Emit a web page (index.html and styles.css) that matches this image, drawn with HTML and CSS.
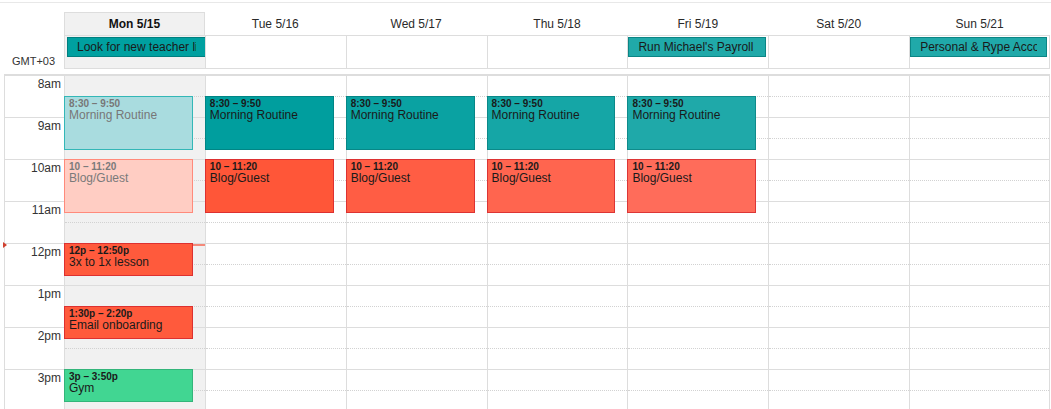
FILE: index.html
```html
<!DOCTYPE html>
<html lang="en">
<head>
    <meta charset="UTF-8">
    <meta name="viewport" content="width=device-width, initial-scale=1.0">
    <title>Week 5/15 - 5/21</title>
    <link rel="stylesheet" href="styles.css">
</head>
<body>
    <div class="topline"></div>
    <div class="calendar">
        <!-- Day headers -->
        <div class="row day-head">
            <div></div>
            <div class="day today">Mon 5/15</div>
            <div class="day">Tue 5/16</div>
            <div class="day">Wed 5/17</div>
            <div class="day">Thu 5/18</div>
            <div class="day">Fri 5/19</div>
            <div class="day">Sat 5/20</div>
            <div class="day">Sun 5/21</div>
        </div>

        <!-- All day events -->
        <div class="row allday">
            <div class="tz">GMT+03</div>
            <div class="cell today"><div class="chip first"><span>Look for new teacher list</span></div></div>
            <div class="cell"></div>
            <div class="cell"></div>
            <div class="cell"></div>
            <div class="cell"><div class="chip light"><span>Run Michael's Payroll</span></div></div>
            <div class="cell"></div>
            <div class="cell"><div class="chip light"><span>Personal &amp; Rype Accounting</span></div></div>
        </div>

        <!-- Time grid -->
        <div class="row grid">
            <div class="gutter">
                <div class="now-mark"></div>
                <div class="hour">8am</div>
                <div class="hour">9am</div>
                <div class="hour">10am</div>
                <div class="hour">11am</div>
                <div class="hour">12pm</div>
                <div class="hour">1pm</div>
                <div class="hour">2pm</div>
                <div class="hour">3pm</div>
            </div>

            <div class="col today">
                <div class="slot"></div><div class="slot"></div><div class="slot"></div><div class="slot"></div>
                <div class="slot"></div><div class="slot"></div><div class="slot"></div><div class="slot"></div>
                <div class="now"></div>
                <div class="event past-teal" style="top: 20px; height: 54px;">
                    <div class="time">8:30 – 9:50</div>
                    <div class="title">Morning Routine</div>
                </div>
                <div class="event past-red" style="top: 83px; height: 54px;">
                    <div class="time">10 – 11:20</div>
                    <div class="title">Blog/Guest</div>
                </div>
                <div class="event red" style="top: 167px; height: 33px;">
                    <div class="time">12p – 12:50p</div>
                    <div class="title">3x to 1x lesson</div>
                </div>
                <div class="event red" style="top: 230px; height: 33px;">
                    <div class="time">1:30p – 2:20p</div>
                    <div class="title">Email onboarding</div>
                </div>
                <div class="event green" style="top: 293px; height: 33px;">
                    <div class="time">3p – 3:50p</div>
                    <div class="title">Gym</div>
                </div>
            </div>

            <div class="col">
                <div class="slot"></div><div class="slot"></div><div class="slot"></div><div class="slot"></div>
                <div class="slot"></div><div class="slot"></div><div class="slot"></div><div class="slot"></div>
                <div class="event teal-1" style="top: 20px; height: 54px;">
                    <div class="time">8:30 – 9:50</div>
                    <div class="title">Morning Routine</div>
                </div>
                <div class="event red-1" style="top: 83px; height: 54px;">
                    <div class="time">10 – 11:20</div>
                    <div class="title">Blog/Guest</div>
                </div>
            </div>

            <div class="col">
                <div class="slot"></div><div class="slot"></div><div class="slot"></div><div class="slot"></div>
                <div class="slot"></div><div class="slot"></div><div class="slot"></div><div class="slot"></div>
                <div class="event teal-2" style="top: 20px; height: 54px;">
                    <div class="time">8:30 – 9:50</div>
                    <div class="title">Morning Routine</div>
                </div>
                <div class="event red-2" style="top: 83px; height: 54px;">
                    <div class="time">10 – 11:20</div>
                    <div class="title">Blog/Guest</div>
                </div>
            </div>

            <div class="col">
                <div class="slot"></div><div class="slot"></div><div class="slot"></div><div class="slot"></div>
                <div class="slot"></div><div class="slot"></div><div class="slot"></div><div class="slot"></div>
                <div class="event teal-3" style="top: 20px; height: 54px;">
                    <div class="time">8:30 – 9:50</div>
                    <div class="title">Morning Routine</div>
                </div>
                <div class="event red-3" style="top: 83px; height: 54px;">
                    <div class="time">10 – 11:20</div>
                    <div class="title">Blog/Guest</div>
                </div>
            </div>

            <div class="col">
                <div class="slot"></div><div class="slot"></div><div class="slot"></div><div class="slot"></div>
                <div class="slot"></div><div class="slot"></div><div class="slot"></div><div class="slot"></div>
                <div class="event teal-4" style="top: 20px; height: 54px;">
                    <div class="time">8:30 – 9:50</div>
                    <div class="title">Morning Routine</div>
                </div>
                <div class="event red-4" style="top: 83px; height: 54px;">
                    <div class="time">10 – 11:20</div>
                    <div class="title">Blog/Guest</div>
                </div>
            </div>

            <div class="col">
                <div class="slot"></div><div class="slot"></div><div class="slot"></div><div class="slot"></div>
                <div class="slot"></div><div class="slot"></div><div class="slot"></div><div class="slot"></div>
            </div>

            <div class="col">
                <div class="slot"></div><div class="slot"></div><div class="slot"></div><div class="slot"></div>
                <div class="slot"></div><div class="slot"></div><div class="slot"></div><div class="slot"></div>
            </div>
        </div>
    </div>
</body>
</html>
```

FILE: styles.css
```css
html, body {
    margin: 0;
    overflow: hidden;
}
body {
    font-family: 'Liberation Sans', Arial, sans-serif;
    color: #333;
    background: #fff;
    padding-top: 2px;
}
.topline {
    border-top: 1px solid #e8e8e8;
}
.calendar {
    margin-left: 4px;
    width: 1046px;
}
.row {
    display: grid;
    grid-template-columns: 60px repeat(7, minmax(0, 1fr));
}

/* headers */
.day-head {
    padding-top: 9px;
}
.day-head .day {
    height: 24px;
    box-sizing: border-box;
    border-top: 1px solid transparent;
    border-bottom: 1px solid #ddd;
    text-align: center;
    font-size: 12px;
    line-height: 22px;
    color: #2a2a2a;
}
.day-head .today {
    background: #f1f1f1;
    border: 1px solid #ddd;
    font-weight: bold;
    color: #111;
}

/* all day row */
.allday .cell {
    height: 33px;
    box-sizing: border-box;
    border-left: 1px solid #ddd;
    border-bottom: 1px solid #ddd;
    padding-top: 1px;
}
.allday .cell:last-child {
    border-right: 1px solid #ddd;
}
.allday .today {
    background: #f1f1f1;
}
.tz {
    height: 33px;
    box-sizing: border-box;
    display: flex;
    align-items: flex-end;
    padding: 0 0 1px 8px;
    font-size: 11px;
    line-height: 13px;
    color: #333;
}
.chip {
    height: 20px;
    box-sizing: border-box;
    margin: 0 2px 0 0;
    padding: 0 9px;
    border: 1px solid #007f7f;
    background: #00a0a0;
    color: #1a1a1a;
    font-size: 12px;
    line-height: 18px;
}
.chip span {
    display: block;
    overflow: hidden;
    white-space: nowrap;
}
.chip.first {
    margin: 0 -1px 0 2px;
}
.chip.light {
    background: #20a9a9;
    border-color: #0b8585;
}

/* time grid */
.grid {
    margin-top: 5px;
    border-top: 2px solid #ddd;
}
.gutter {
    position: relative;
    border-left: 1px solid #ddd;
}
.hour {
    height: 42px;
    box-sizing: border-box;
    border-bottom: 1px solid #ddd;
    padding: 1px 3px 0 0;
    text-align: right;
    font-size: 12px;
    line-height: 14px;
    color: #333;
}
.now-mark {
    position: absolute;
    left: -2px;
    top: 166px;
    width: 0;
    height: 0;
    border-left: 4px solid #d0402f;
    border-top: 3px solid transparent;
    border-bottom: 3px solid transparent;
}
.col {
    position: relative;
    border-left: 1px solid #ddd;
}
.col:last-child {
    border-right: 1px solid #ddd;
}
.col.today {
    background: #f1f1f1;
}
.slot {
    height: 42px;
    box-sizing: border-box;
    border-bottom: 1px solid #ddd;
}
.slot::before {
    content: "";
    display: block;
    height: 21px;
    box-sizing: border-box;
    border-bottom: 1px dotted #d2d2d2;
}
.now {
    position: absolute;
    left: -1px;
    right: 0;
    top: 168px;
    height: 2px;
    background: #f4897a;
}

/* events */
.event {
    position: absolute;
    left: -1px;
    right: 12px;
    box-sizing: border-box;
    border: 1px solid;
    padding: 1px 4px;
    overflow: hidden;
    color: #1a1a1a;
}
.event .time {
    font-size: 10px;
    font-weight: bold;
    line-height: 11px;
}
.event .title {
    font-size: 12px;
    line-height: 13px;
}
.past-teal {
    background: #a9dcdf;
    border-color: #33b7b7;
    color: #777;
}
.past-red {
    background: #ffcdc3;
    border-color: #ff8a7b;
    color: #7a7a7a;
}
.red {
    background: #ff5a3c;
    border-color: #dd3030;
}
.green {
    background: #41d692;
    border-color: #33b57a;
}
.teal-1 { background: #009e9e; border-color: #008585; }
.teal-2 { background: #0aa2a2; border-color: #078787; }
.teal-3 { background: #15a6a6; border-color: #0b8989; }
.teal-4 { background: #1fa9a9; border-color: #0f8b8b; }
.red-1 { background: #ff5638; border-color: #dd3030; }
.red-2 { background: #ff5d44; border-color: #dd3232; }
.red-3 { background: #ff654f; border-color: #dd3434; }
.red-4 { background: #ff6c5a; border-color: #dd3636; }
```
